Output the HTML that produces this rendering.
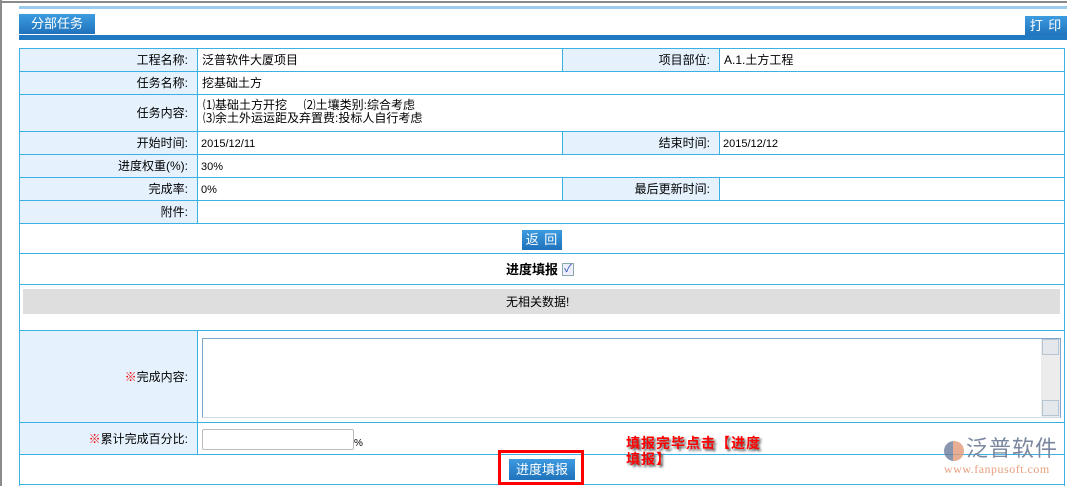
<!DOCTYPE html>
<html><head><meta charset="utf-8"><style>
*{margin:0;padding:0;box-sizing:border-box}
body{width:1067px;height:486px;overflow:hidden;background:#fff;position:relative;font-family:"Liberation Sans","Noto Sans CJK SC","WenQuanYi Zen Hei",sans-serif;font-size:12px;color:#000}
.a{position:absolute}
.h{position:absolute;height:1px;background:#3bb0e2}
.v{position:absolute;width:1px;background:#3bb0e2}
.lb{position:absolute;background:#e5f2fd}
.t{position:absolute;line-height:14px;white-space:nowrap}
.r{text-align:right}
.btn{position:absolute;background:linear-gradient(#3d9be0,#1f72bb);color:#fff;text-align:center}
</style></head><body>
<div class="a" style="left:0;top:0;width:2px;height:486px;background:#8a8a8a"></div>
<div class="a" style="left:0;top:1px;width:1067px;height:2px;background:#8a8a8a"></div>
<div class="a" style="left:19px;top:6px;width:1048px;height:3px;background:#9ccbee"></div>
<div class="btn" style="left:19px;top:14px;width:76px;height:20px;line-height:20px;font-size:13px">分部任务</div>
<div class="btn" style="left:1025px;top:16px;width:42px;height:20px;line-height:20px;font-size:13px;letter-spacing:1px">打 印</div>
<div class="a" style="left:19px;top:35px;width:1048px;height:5px;background:#2179c2"></div>

<div class="lb" style="left:19px;top:49px;width:178px;height:175px"></div>
<div class="lb" style="left:562px;top:49px;width:157px;height:23px"></div>
<div class="lb" style="left:562px;top:132px;width:157px;height:23px"></div>
<div class="lb" style="left:562px;top:178px;width:157px;height:23px"></div>
<div class="lb" style="left:19px;top:331px;width:178px;height:124px"></div>
<div class="a" style="left:23px;top:289px;width:1037px;height:25px;background:#dedede"></div>

<div class="h" style="left:19px;top:48px;width:1046px"></div>
<div class="h" style="left:19px;top:71px;width:1046px"></div>
<div class="h" style="left:19px;top:94px;width:1046px"></div>
<div class="h" style="left:19px;top:131px;width:1046px"></div>
<div class="h" style="left:19px;top:154px;width:1046px"></div>
<div class="h" style="left:19px;top:177px;width:1046px"></div>
<div class="h" style="left:19px;top:200px;width:1046px"></div>
<div class="h" style="left:19px;top:223px;width:1046px"></div>
<div class="h" style="left:19px;top:253px;width:1046px"></div>
<div class="h" style="left:19px;top:284px;width:1046px"></div>
<div class="h" style="left:19px;top:330px;width:1046px"></div>
<div class="h" style="left:19px;top:422px;width:1046px"></div>
<div class="h" style="left:19px;top:454px;width:1046px"></div>
<div class="h" style="left:19px;top:484px;width:1046px"></div>
<div class="v" style="left:19px;top:48px;height:438px"></div>
<div class="v" style="left:1064px;top:48px;height:438px"></div>
<div class="v" style="left:197px;top:48px;height:176px"></div>
<div class="v" style="left:197px;top:330px;height:125px"></div>
<div class="v" style="left:562px;top:48px;height:24px"></div>
<div class="v" style="left:719px;top:48px;height:24px"></div>
<div class="v" style="left:562px;top:131px;height:24px"></div>
<div class="v" style="left:719px;top:131px;height:24px"></div>
<div class="v" style="left:562px;top:177px;height:24px"></div>
<div class="v" style="left:719px;top:177px;height:24px"></div>

<div class="t r" style="left:20px;width:168px;top:53px">工程名称:</div>
<div class="t r" style="left:20px;width:168px;top:76px">任务名称:</div>
<div class="t r" style="left:20px;width:168px;top:106px">任务内容:</div>
<div class="t r" style="left:20px;width:168px;top:136px">开始时间:</div>
<div class="t r" style="left:20px;width:168px;top:159px">进度权重(%):</div>
<div class="t r" style="left:20px;width:168px;top:182px">完成率:</div>
<div class="t r" style="left:20px;width:168px;top:205px">附件:</div>
<div class="t r" style="left:563px;width:147px;top:53px">项目部位:</div>
<div class="t r" style="left:563px;width:147px;top:136px">结束时间:</div>
<div class="t r" style="left:563px;width:147px;top:182px">最后更新时间:</div>
<div class="t" style="left:202px;top:53px">泛普软件大厦项目</div>
<div class="t" style="left:724px;top:53px">A.1.土方工程</div>
<div class="t" style="left:202px;top:76px">挖基础土方</div>
<div class="t" style="left:203px;top:99px;line-height:13px">⑴基础土方开挖&nbsp;&nbsp;&nbsp;&nbsp;&nbsp;⑵土壤类别:综合考虑<br>⑶余土外运运距及弃置费:投标人自行考虑</div>
<div class="t" style="left:201px;top:137px;font-size:11px">2015/12/11</div>
<div class="t" style="left:723px;top:137px;font-size:11px">2015/12/12</div>
<div class="t" style="left:201px;top:160px;font-size:11px">30%</div>
<div class="t" style="left:201px;top:183px;font-size:11px">0%</div>

<div class="btn" style="left:522px;top:230px;width:40px;height:20px;line-height:20px;font-size:13px;letter-spacing:1px">返 回</div>
<div class="t" style="left:506px;top:263px;font-weight:bold;font-size:13px">进度填报</div>
<div class="a" style="left:562px;top:263px;width:12px;height:13px;border:1px solid #8aa;background:#eef;color:#2a4fb0;font-size:11px;line-height:11px;text-align:center">✓</div>
<div class="t" style="left:506px;top:295px">无相关数据!</div>

<div class="t r" style="left:20px;width:168px;top:370px"><span style="color:#e00">※</span>完成内容:</div>
<div class="t r" style="left:20px;width:168px;top:432px"><span style="color:#e00">※</span>累计完成百分比:</div>
<div class="a" style="left:202px;top:338px;width:859px;height:80px;border:1px solid #7fa7cc;border-bottom-color:#c8dced;background:#fff"></div>
<div class="a" style="left:1041px;top:339px;width:19px;height:78px;background:#ececec"></div>
<div class="a" style="left:1042px;top:339px;width:17px;height:16px;border:1px solid #b5c5d2;background:#e4e8ec"></div>
<div class="a" style="left:1042px;top:400px;width:17px;height:16px;border:1px solid #b5c5d2;background:#e4e8ec"></div>
<div class="a" style="left:202px;top:429px;width:152px;height:21px;border:1px solid #bbb;border-radius:2px;background:#fff"></div>
<div class="t" style="left:354px;top:437px;font-size:10px">%</div>

<div class="a" style="left:498px;top:450px;width:86px;height:35px;border:3px solid #f00"></div>
<div class="btn" style="left:509px;top:459px;width:66px;height:21px;line-height:21px;font-size:13px">进度填报</div>
<div class="t" style="left:626px;top:435px;color:#f00;font-weight:bold;font-size:14px;line-height:16px;letter-spacing:1px;text-shadow:2px 2px 2px #555">填报完毕点击【进度<br>填报】</div>

<div class="a" style="left:944px;top:441px;width:20px;height:20px;border-radius:50%;background:linear-gradient(90deg,#6b7b9a 45%,#e29a78 45%);opacity:.8"></div>
<div class="t" style="left:966px;top:437px;font-size:22px;line-height:24px;color:#7a879e;letter-spacing:1px">泛普软件</div>
<div class="t" style="left:944px;top:462px;font-size:12px;color:#e8a080;font-family:'Liberation Serif',serif;letter-spacing:0.5px">www.fanpusoft.com</div>
</body></html>
